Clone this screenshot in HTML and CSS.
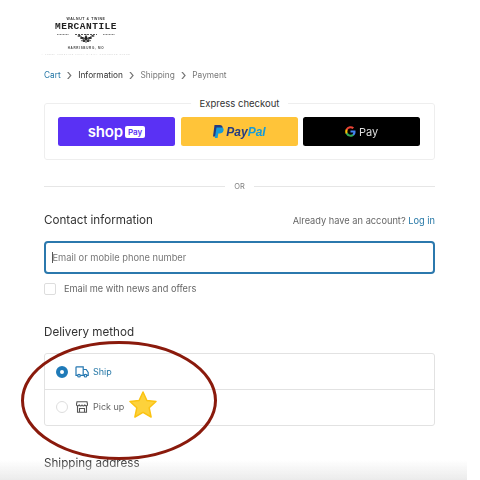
FILE: index.html
```html
<!DOCTYPE html>
<html lang="en">
<head>
<meta charset="utf-8">
<title>Checkout</title>
<link rel="stylesheet" href="styles.css">
</head>
<body>
<div class="page">
  <header class="logo">
    <div class="logo-top">WALNUT &amp; TWINE</div>
    <div class="logo-main">MERCANTILE</div>
    <svg class="logo-sprig" width="62" height="12" viewBox="0 0 62 12">
      <path d="M2 2.500h12M48 2.500h12" stroke="#777" stroke-width=".9" stroke-dasharray="1 .5"/>
      <path d="M20 2.500h22" stroke="#444" stroke-width=".9" stroke-dasharray="2 1"/>
      <path d="M31 2v9M24 3l7 5 7-5M26 9l5-3 5 3" stroke="#333" stroke-width=".8" fill="none"/>
      <g fill="#222"><ellipse cx="27" cy="6" rx="2" ry="1"/><ellipse cx="35" cy="6" rx="2" ry="1"/><ellipse cx="31" cy="6" rx="1.500" ry="2"/><ellipse cx="29" cy="9" rx="1.500" ry="1"/><ellipse cx="33" cy="9" rx="1.500" ry="1"/><ellipse cx="24" cy="4" rx="1.500" ry=".8"/><ellipse cx="38" cy="4" rx="1.500" ry=".8"/></g>
    </svg>
    <div class="logo-city">HARRISBURG, MO</div>
    <div class="logo-sub">A FRESH PRESTIGE FULLY EASILY COMMERCE STORE</div>
  </header>

  <nav class="crumbs">
    <span class="link">Cart</span><span class="chev">›</span>
    <span class="current">Information</span><span class="chev">›</span>
    <span>Shipping</span><span class="chev">›</span>
    <span>Payment</span>
  </nav>

  <section class="express">
    <div class="express-label">Express checkout</div>
    <div class="pay-row">
      <div class="pay shop"><span class="shop-word">shop</span><span class="shop-pay">Pay</span></div>
      <div class="pay paypal">
        <svg width="12" height="13" viewBox="0 0 12 13"><path d="M2.500 0h5c2.500 0 3.500 1.500 3 3.500C10 6 8.500 7 6.500 7H5l-.8 4.500H1z" fill="#253b80"/><path d="M4.500 2.500h5c1.500 0 2.500 1 2 3-.5 2.200-2 3-4 3H6.300L5.600 13H2.800z" fill="#179bd7"/></svg>
        <span class="pp-a">Pay</span><span class="pp-b">Pal</span>
      </div>
      <div class="pay gpay">
        <svg width="11" height="11" viewBox="0 0 24 24"><path d="M23 12.300c0-.8-.1-1.600-.2-2.300H12v4.400h6.200a5.300 5.300 0 0 1-2.300 3.500v2.900h3.700c2.200-2 3.400-5 3.400-8.500z" fill="#4285f4"/><path d="M12 23.500c3.100 0 5.700-1 7.600-2.800l-3.700-2.900c-1 .7-2.400 1.100-3.900 1.100-3 0-5.500-2-6.400-4.700H1.800v3A11.500 11.500 0 0 0 12 23.500z" fill="#34a853"/><path d="M5.600 14.200a6.900 6.900 0 0 1 0-4.400v-3H1.800a11.500 11.500 0 0 0 0 10.400z" fill="#fbbc04"/><path d="M12 5.100c1.700 0 3.200.6 4.400 1.700l3.300-3.300A11.500 11.500 0 0 0 1.800 6.800l3.800 3C6.500 7.100 9 5.100 12 5.100z" fill="#ea4335"/></svg>
        <span class="g-word">Pay</span>
      </div>
    </div>
  </section>

  <div class="or"><span class="or-line"></span><span class="or-text">OR</span><span class="or-line"></span></div>

  <div class="contact-head">
    <h2 class="title">Contact information</h2>
    <div class="account">Already have an account? <span class="link">Log in</span></div>
  </div>
  <div class="input"><span class="caret"></span>Email or mobile phone number</div>
  <div class="check-row"><span class="check"></span>Email me with news and offers</div>

  <h2 class="title delivery-title">Delivery method</h2>
  <div class="options">
    <div class="option">
      <span class="radio on"></span>
      <svg class="opt-icon" width="14" height="12" viewBox="0 0 14 12" fill="none" stroke="#2577b1" stroke-width="1.200"><path d="M3 9.300H1V1.500a.7.700 0 0 1 .7-.7h6.500v8.500H5.300"/><path d="M8.200 3.500h3l2 3v2.800h-1.500M8.200 9.300h1.200"/><circle cx="4" cy="9.700" r="1.300"/><circle cx="10.500" cy="9.700" r="1.300"/></svg>
      <span class="link">Ship</span>
    </div>
    <div class="option second">
      <span class="radio"></span>
      <svg class="opt-icon" width="12" height="12" viewBox="0 0 12 12" fill="none" stroke="#555" stroke-width="1.100"><path d="M1 .8h10l.6 2.800a1.500 1.500 0 0 1-2.800.5 1.700 1.700 0 0 1-2.800 0 1.700 1.700 0 0 1-2.800 0A1.500 1.500 0 0 1 .4 3.600zM1.500 5v6.300h9V5M3.500 11V7.500h5V11"/></svg>
      <span>Pick up</span>
    </div>
  </div>

  <h2 class="title shipping-title">Shipping address</h2>

  <div class="fade"></div>
  <svg class="ellipse" width="200" height="124" viewBox="0 0 200 124"><ellipse cx="99" cy="60.500" rx="96.500" ry="58" fill="none" stroke="#8a1a0c" stroke-width="3"/></svg>
  <svg class="star" width="28" height="28" viewBox="0 0 28 28"><path d="M14 1l3.900 8.500 9.100 1-6.800 6.300 1.900 9.200L14 21.300 5.900 26l1.900-9.200L1 10.500l9.100-1z" fill="#fdd23b" stroke="#fbc312" stroke-width="1.500" stroke-linejoin="round"/></svg>
</div>
</body>
</html>
```
FILE: styles.css
```css
* { box-sizing: border-box; }
html, body { margin: 0; padding: 0; background: #fff; }
body { width: 480px; height: 480px; overflow: hidden; font-family: Inter, "Liberation Sans", sans-serif; color: #333; }
.page { position: relative; width: 480px; height: 480px; overflow: hidden; padding: 17px 45px 0 44px; filter: blur(.35px); }
.logo { display: flex; flex-direction: column; align-items: center; width: 84px; height: 41px; }
.logo-top { font: 700 3.500px/4px "Liberation Sans", sans-serif; letter-spacing: .6px; color: #333; white-space: nowrap; }
.logo-main { font: 700 9.500px/10px "Liberation Mono", monospace; letter-spacing: .5px; color: #222; white-space: nowrap; margin-top: 1px; }
.logo-sprig { display: block; }
.logo-city { font: 700 3px/4px "Liberation Sans", sans-serif; letter-spacing: .7px; color: #444; white-space: nowrap; margin-top: 2px; }
.logo-sub { font: 2.200px/3px "Liberation Sans", sans-serif; letter-spacing: .7px; color: #d0d0d0; white-space: nowrap; margin-top: 3px; }
.crumbs { display: flex; align-items: center; height: 14px; margin-top: 10px; font-size: 8.300px; color: #777; white-space: nowrap; }
.chev { width: 17.500px; text-align: center; font-size: 15px; line-height: 14px; color: #777; }
.link { color: #2577a6; }
.current { color: #333; }
.express { position: relative; height: 57px; margin-top: 21px; border: 1px solid #eee; border-radius: 3px; padding: 13px 14px 0 13px; }
.express-label { position: absolute; top: -7px; left: 50%; transform: translateX(-50%); padding: 0 9px; background: #fff; font-size: 9.500px; line-height: 13px; white-space: nowrap; color: #333; }
.pay-row { display: flex; gap: 5.500px; }
.pay { flex: 1; height: 29px; border-radius: 2.500px; display: flex; align-items: center; justify-content: center; }
.shop { background: #5a31f4; color: #fff; gap: 2px; }
.shop-word { font-size: 15px; font-weight: 600; line-height: 16px; letter-spacing: -.2px; }
.shop-pay { background: #fff; color: #5a31f4; border-radius: 2px; font-size: 8px; font-weight: 600; line-height: 12px; padding: 0 3px; }
.paypal { background: #ffc439; font: italic 700 12px/14px "Liberation Sans", sans-serif; gap: 1px; }
.pp-a { color: #253b80; margin-left: 1px; }
.pp-b { color: #179bd7; margin-left: -1px; }
.gpay { background: #000; color: #fff; gap: 3px; }
.g-word { font-size: 11px; line-height: 14px; color: #ddd; }
.or { display: flex; align-items: center; gap: 9px; margin-top: 20px; height: 12px; }
.or-line { flex: 1; height: 1px; background: #e6e6e6; }
.or-text { font-size: 7.500px; color: #808080; }
.contact-head { display: flex; justify-content: space-between; align-items: center; margin-top: 20px; height: 16px; }
.title { margin: 0; font-size: 11.650px; font-weight: 400; line-height: 16px; color: #333; }
.account { font-size: 9.250px; color: #666; }
.input { display: flex; align-items: center; height: 33px; margin-top: 13px; border: 2px solid #2b78ad; border-radius: 4px; padding-left: 6px; font-size: 9.300px; color: #777; }
.caret { width: 1px; height: 11px; background: #555; margin-right: -.5px; }
.check-row { display: flex; align-items: center; gap: 8px; height: 13px; margin-top: 8px; font-size: 9.200px; color: #666; }
.check { width: 12px; height: 12px; border: 1px solid #ddd; border-radius: 2px; }
.delivery-title { margin-top: 29px; }
.options { height: 73px; margin-top: 13px; border: 1px solid #e2e2e2; border-radius: 3px; font-size: 9px; color: #666; }
.option { display: flex; align-items: center; height: 35px; padding-left: 11px; }
.option.second { height: 36px; padding-bottom: 2px; }
.second { border-top: 1px solid #e2e2e2; }
.radio { width: 12px; height: 12px; border: 1px solid #ddd; border-radius: 50%; margin-right: 7px; background: #fff; }
.radio.on { border: 4.500px solid #1f7ab8; }
.opt-icon { display: block; margin-right: 4px; flex: none; }
.second .opt-icon { margin-left: 1px; margin-right: 5px; }
.shipping-title { margin-top: 29px; }
.fade { position: absolute; left: 0; right: 13px; bottom: 0; height: 20px; background: linear-gradient(#ffffff00, #ebebeb); }
.ellipse { position: absolute; left: 20px; top: 340px; }
.star { position: absolute; left: 129px; top: 391px; }
```
